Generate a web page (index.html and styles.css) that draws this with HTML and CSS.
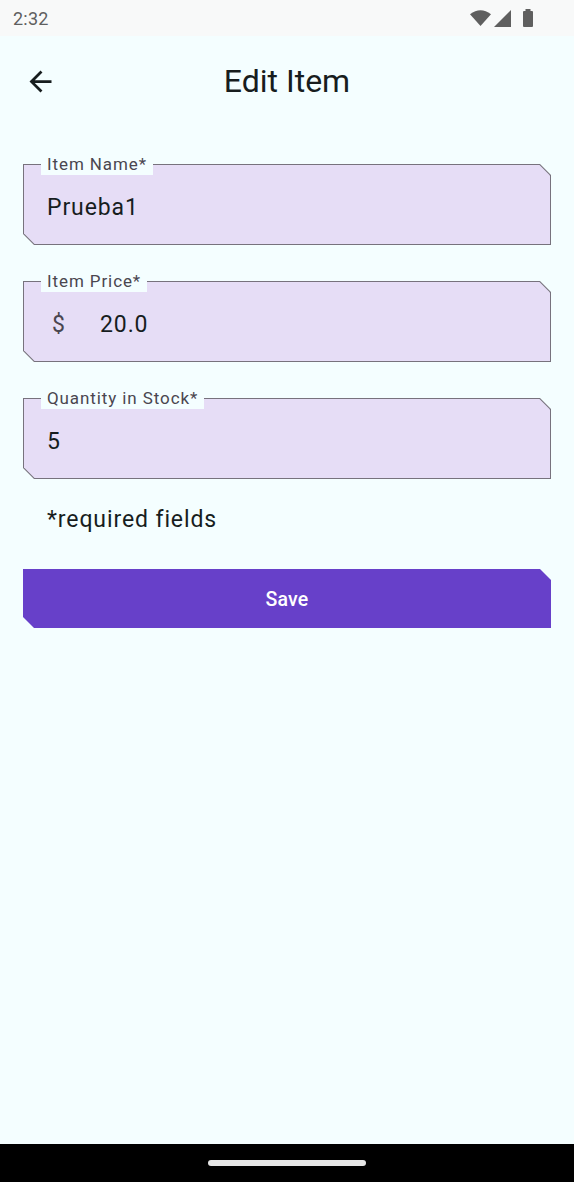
FILE: index.html
```html
<!DOCTYPE html>
<html lang="en">
<head>
<meta charset="utf-8">
<title>Edit Item</title>
<link rel="stylesheet" href="styles.css">
</head>
<body>
<div class="status">
  <span class="time">2:32</span>
  <span class="sys-icons">
    <svg class="ic-wifi" width="21" height="16" viewBox="0 0 21 16"><path d="M0 4.2 Q10.5 -3.6 21 4.2 L10.5 16 Z" fill="#5f5f5f"/></svg>
    <svg class="ic-signal" width="17" height="17" viewBox="0 0 17 17"><path d="M17 0 V17 H0 Z" fill="#5f5f5f"/></svg>
    <svg class="ic-battery" width="12" height="18" viewBox="0 0 12 18"><rect x="3.5" y="0" width="5" height="2" fill="#5f5f5f"/><rect x="1" y="2" width="10" height="16" rx="1" fill="#5f5f5f"/></svg>
  </span>
</div>

<header class="appbar">
  <button class="back" aria-label="Back">
    <svg width="33" height="33" viewBox="0 0 24 24"><path d="M20 11H7.830l5.59-5.59L12 4l-8 8 8 8 1.41-1.41L7.83 13H20v-2z" fill="#171d1e"/></svg>
  </button>
  <h1 class="title">Edit Item</h1>
</header>

<main class="form">
  <div class="field">
    <div class="frame"><div class="box"><span class="value">Prueba1</span></div></div>
    <span class="label">Item Name*</span>
  </div>
  <div class="field">
    <div class="frame"><div class="box"><span class="prefix">$</span><span class="value value-price">20.0</span></div></div>
    <span class="label">Item Price*</span>
  </div>
  <div class="field">
    <div class="frame"><div class="box"><span class="value">5</span></div></div>
    <span class="label">Quantity in Stock*</span>
  </div>
  <p class="note">*required fields</p>
  <div class="save-wrap"><button class="save">Save</button></div>
</main>

<div class="navbar"><span class="handle"></span></div>
</body>
</html>
```

FILE: styles.css
```css
* { box-sizing: border-box; }
html, body { margin: 0; padding: 0; }
body {
  width: 574px;
  min-height: 1182px;
  display: flex;
  flex-direction: column;
  background: #f4feff;
  font-family: Roboto, "Noto Sans", sans-serif;
  color: #171d1e;
}
.status {
  height: 36px;
  background: #f8f9f9;
  display: flex;
  align-items: center;
  justify-content: space-between;
  padding: 0 40px 0 13px;
}
.time {
  font-size: 18px;
  color: #5f5f5f;
  letter-spacing: 0.2px;
}
.sys-icons {
  display: flex;
  align-items: center;
  gap: 3px;
}
.ic-signal { margin-right: 8px; }
.appbar {
  height: 90px;
  position: relative;
  display: flex;
  align-items: center;
  justify-content: center;
}
.back {
  position: absolute;
  left: 24px;
  top: 29px;
  width: 33px;
  height: 33px;
  padding: 0;
  border: 0;
  background: none;
  display: flex;
}
.title {
  margin: 0;
  font-size: 32px;
  font-weight: 400;
  color: #171d1e;
}
.form {
  flex: 1;
  display: flex;
  flex-direction: column;
  padding: 38px 23px 0 23px;
}
.field {
  position: relative;
  margin-bottom: 36px;
}
.frame {
  height: 81px;
  padding: 1px;
  background: #77727d;
  clip-path: polygon(0 0, calc(100% - 11px) 0, 100% 11px, 100% 100%, 11px 100%, 0 calc(100% - 11px));
}
.box {
  height: 100%;
  background: #e6ddf6;
  clip-path: polygon(0 0, calc(100% - 10.5px) 0, 100% 10.5px, 100% 100%, 10.5px 100%, 0 calc(100% - 10.5px));
  display: flex;
  align-items: center;
  padding: 5px 0 0 23px;
}
.value {
  font-size: 23px;
  letter-spacing: 0.9px;
  color: #171d1e;
}
.prefix {
  font-size: 23px;
  color: #4a4650;
  margin-left: 5px;
  width: 48px;
}
.label {
  position: absolute;
  left: 18px;
  top: -8px;
  padding: 0 6px;
  height: 19px;
  line-height: 17px;
  background: #f4feff;
  font-size: 17px;
  letter-spacing: 0.9px;
  color: #4a4650;
}
.note {
  margin: -10px 0 0 24px;
  font-size: 23px;
  letter-spacing: 0.9px;
  line-height: 30px;
  color: #171d1e;
}
.save-wrap {
  margin-top: 34px;
}
.save {
  display: block;
  width: 100%;
  height: 59px;
  border: 0;
  background: #6740c9;
  color: #ffffff;
  font-family: Roboto, "Noto Sans", sans-serif;
  font-size: 19.5px;
  font-weight: 500;
  letter-spacing: 0.2px;
  padding-top: 2px;
  clip-path: polygon(0 0, calc(100% - 11px) 0, 100% 11px, 100% 100%, 11px 100%, 0 calc(100% - 11px));
}
.navbar {
  height: 38px;
  background: #000;
  display: flex;
  align-items: center;
  justify-content: center;
}
.handle {
  width: 158px;
  height: 6px;
  border-radius: 3px;
  background: #e6e6e6;
}
```
